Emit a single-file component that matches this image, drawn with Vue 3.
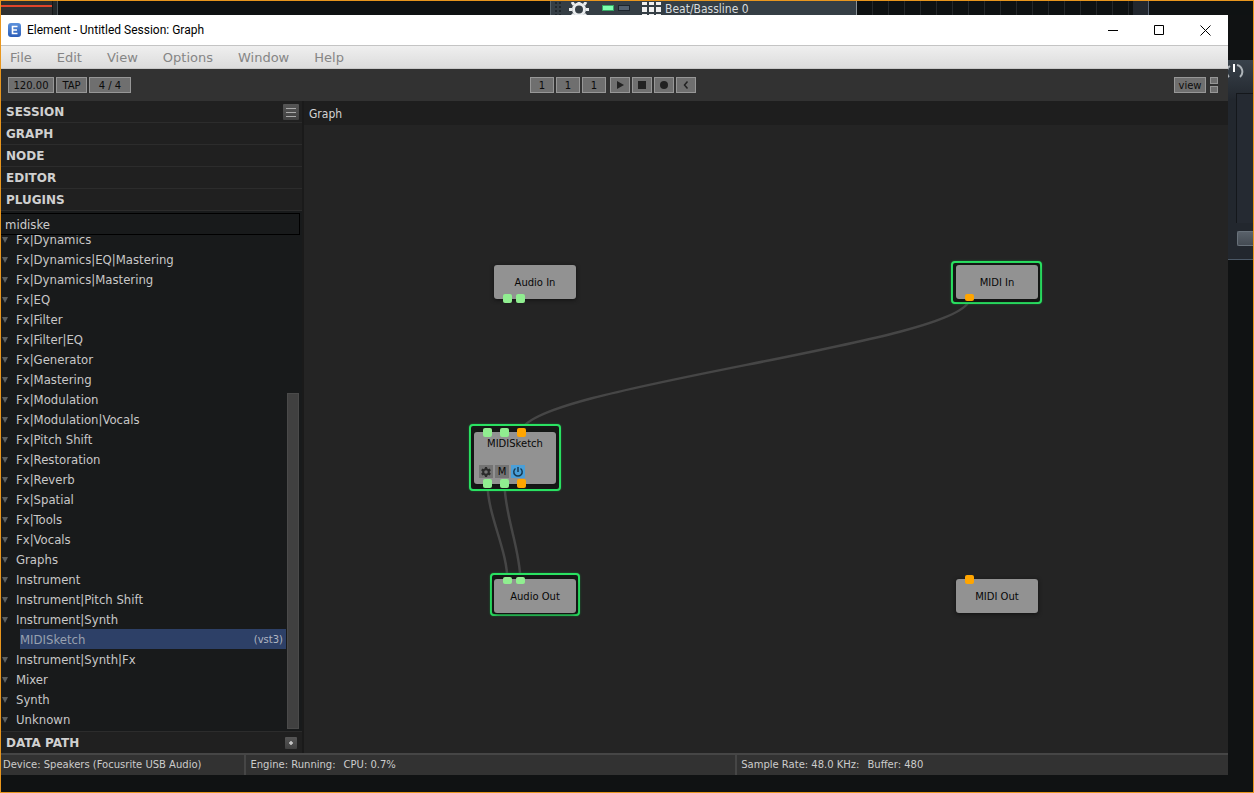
<script setup>
import { ref } from 'vue'

const menus = ['File', 'Edit', 'View', 'Options', 'Window', 'Help']
const panels = ['SESSION', 'GRAPH', 'NODE', 'EDITOR', 'PLUGINS']
const search = ref('midiske')

const plugins = [
  'Fx|Dynamics', 'Fx|Dynamics|EQ|Mastering', 'Fx|Dynamics|Mastering', 'Fx|EQ', 'Fx|Filter',
  'Fx|Filter|EQ', 'Fx|Generator', 'Fx|Mastering', 'Fx|Modulation', 'Fx|Modulation|Vocals',
  'Fx|Pitch Shift', 'Fx|Restoration', 'Fx|Reverb', 'Fx|Spatial', 'Fx|Tools', 'Fx|Vocals',
  'Graphs', 'Instrument', 'Instrument|Pitch Shift', 'Instrument|Synth',
  { name: 'MIDISketch', format: '(vst3)' },
  'Instrument|Synth|Fx', 'Mixer', 'Synth', 'Unknown',
].map((p) => (typeof p === 'string' ? { name: p } : p))

/* Node positions on the canvas; port positions are relative to the node body. */
const nodes = [
  { name: 'Audio In', x: 190, y: 140, h: 34, ports: [['audio', 9, 29, 9], ['audio', 22, 29, 9]] },
  { name: 'MIDI In', x: 652, y: 140, h: 34, frame: [4, 4, 5, 5], ports: [['midi', 9, 29, 7]] },
  {
    name: 'MIDISketch', x: 170, y: 307, h: 52, frame: [8, 5, 7, 5], tools: true,
    ports: [
      ['audio', 9, -4, 9], ['audio', 26, -4, 9], ['midi', 43, -4, 9],
      ['audio', 9, 47, 9], ['audio', 26, 47, 9], ['midi', 43, 47, 9],
    ],
  },
  { name: 'Audio Out', x: 190, y: 454, h: 34, frame: [6, 4, 3, 4], ports: [['audio', 9, -2, 7], ['audio', 22, -2, 7]] },
  { name: 'MIDI Out', x: 652, y: 454, h: 34, ports: [['midi', 9, -4, 9]] },
]
const px = (n) => n + 'px'
const nodeStyle = (n) => ({ left: px(n.x), top: px(n.y), height: px(n.h) })
const frameStyle = ([t, r, b, l]) => ({ top: px(-t), right: px(-r), bottom: px(-b), left: px(-l) })
const portStyle = ([, x, y, h]) => ({ left: px(x), top: px(y), height: px(h) })
</script>

<template>
  <div class="desktop">
    <div class="playlist">
      <div class="wave"></div>
      <div class="gap"></div>
      <div class="track">
        <span class="grip"></span>
        <svg class="gear" width="22" height="13" viewBox="0 0 22 13">
          <g fill="none" stroke="#e9ecee">
            <circle cx="11" cy="7.500" r="5.500" stroke-width="3" />
            <path d="M11 1v-3M11 13v3M4 7.500H1M18 7.500h3M6 3L4 0M16 3l2-3M6 12l-2 2M16 12l2 2" stroke-width="3" />
          </g>
        </svg>
        <span class="led on"></span>
        <span class="led"></span>
        <svg class="pads" width="20" height="13" viewBox="0 0 20 13" fill="#f0f0f0">
          <path d="M0 0h5v3H0zM7 0h5v3H7zM14 0h5v3h-5zM0 5h5v5H0zM7 5h5v5H7zM14 5h5v5h-5zM0 12h5v1H0zM7 12h5v1H7zM14 12h5v1h-5z" />
        </svg>
        <span class="track-name">Beat/Bassline 0</span>
      </div>
      <div class="cells"></div>
      <div class="edge"></div>
      <div class="rest"></div>
    </div>

    <div class="middle">
      <main class="window">
        <header class="titlebar">
          <svg width="14" height="14" viewBox="0 0 14 14">
            <defs>
              <linearGradient id="logo" x2="0" y2="1">
                <stop stop-color="#5d92dc" /><stop offset="1" stop-color="#2a5cb8" />
              </linearGradient>
            </defs>
            <rect width="13" height="14" rx="3" fill="url(#logo)" />
            <path d="M9.500 3.500H4.500v7h5M4.500 7H9" fill="none" stroke="#fff" stroke-width="1.600" />
          </svg>
          <h1>Element - Untitled Session: Graph</h1>
          <div class="controls">
            <button aria-label="Minimize"><svg width="11" height="11" viewBox="0 0 11 11"><path d="M0 5.500h10" /></svg></button>
            <button aria-label="Maximize"><svg width="11" height="11" viewBox="0 0 11 11"><path d="M.5.5h9v9h-9z" /></svg></button>
            <button aria-label="Close"><svg width="11" height="11" viewBox="0 0 11 11"><path d="M.5.5l10 10M10.500.5l-10 10" /></svg></button>
          </div>
        </header>

        <nav class="menubar">
          <button v-for="m in menus" :key="m">{{ m }}</button>
        </nav>

        <div class="toolbar">
          <div class="group">
            <button class="tool tempo">120.00</button>
            <button class="tool tap">TAP</button>
            <button class="tool meter">4 / 4</button>
          </div>
          <div class="group">
            <button class="tool beat">1</button>
            <button class="tool beat">1</button>
            <button class="tool beat">1</button>
            <span class="spacer"></span>
            <button class="tool icon" aria-label="Play"><svg width="10" height="10" viewBox="0 0 10 10"><path d="M2 1l7 4-7 4z" /></svg></button>
            <button class="tool icon" aria-label="Stop"><svg width="10" height="10" viewBox="0 0 10 10"><path d="M1 1h8v8H1z" /></svg></button>
            <button class="tool icon" aria-label="Record"><svg width="10" height="10" viewBox="0 0 10 10"><circle cx="5" cy="5" r="4" /></svg></button>
            <button class="tool icon" aria-label="Rewind"><svg width="10" height="10" viewBox="0 0 10 10"><path d="M6.500 1.500L3.500 5l3 3.500" fill="none" stroke="#222" stroke-width="1.500" /></svg></button>
          </div>
          <div class="group right">
            <button class="tool view">view</button>
            <div class="squares"><button aria-label="Upper pane"></button><button aria-label="Lower pane"></button></div>
          </div>
        </div>

        <div class="body">
          <aside class="sidebar">
            <h2 v-for="(p, i) in panels" :key="p" class="panel">
              {{ p }}
              <button v-if="i === 0" class="list-btn" aria-label="Session menu">
                <svg width="10" height="9" viewBox="0 0 10 9"><path d="M0 .5h10M0 4.500h10M0 8.500h10" stroke="#aaa" /></svg>
              </button>
            </h2>
            <input v-model="search" class="search" type="text" aria-label="Search plugins" />
            <div class="tree">
              <ul>
                <li v-for="p in plugins" :key="p.name" :class="{ selected: p.format }">
                  <svg v-if="!p.format" width="6" height="6" viewBox="0 0 6 6"><path d="M0 0h6L3 6z" fill="#5c6061" /></svg>
                  <span>{{ p.name }}</span>
                  <small v-if="p.format">{{ p.format }}</small>
                </li>
              </ul>
              <div class="scroll"><div class="thumb"></div></div>
            </div>
            <h2 class="panel last">
              DATA PATH
              <button class="add-btn" aria-label="Add data path">
                <svg width="6" height="6" viewBox="0 0 6 6"><path d="M3 1v4M1 3h4" stroke="#ccc" stroke-width="1.500" /></svg>
              </button>
            </h2>
          </aside>

          <section class="graph">
            <div class="tab">Graph</div>
            <div class="canvas">
              <svg class="wires" width="100%" height="100%">
                <path d="M665.500 173.500C665.500 218 217.500 262 217.500 307" />
                <path d="M183.500 358C183.500 391 203.500 424 203.500 457" />
                <path d="M200.500 358C200.500 391 216.500 424 216.500 457" />
              </svg>
              <div v-for="n in nodes" :key="n.name" class="node" :style="nodeStyle(n)">
                <div v-if="n.frame" class="frame" :style="frameStyle(n.frame)"></div>
                <div class="face" :class="{ plugin: n.tools }">
                  <span>{{ n.name }}</span>
                  <div v-if="n.tools" class="node-tools">
                    <button aria-label="Settings">
                      <svg width="12" height="12" viewBox="0 0 12 12" fill="none" stroke="#2b2b2b">
                        <circle cx="6" cy="6" r="2.800" stroke-width="2" />
                        <path d="M6 1v2M6 9v2M1.700 3.500l1.700 1M8.600 7.500l1.700 1M1.700 8.500l1.700-1M8.600 4.500l1.700-1" stroke-width="2.200" />
                      </svg>
                    </button>
                    <button>M</button>
                    <button class="power" aria-label="Power">
                      <svg width="12" height="12" viewBox="0 0 12 12" fill="none" stroke="#173a52" stroke-width="1.500">
                        <path d="M6 1v5M3.500 2.500a4.200 4.200 0 1 0 5 0" />
                      </svg>
                    </button>
                  </div>
                </div>
                <i v-for="(p, i) in n.ports" :key="i" class="port" :class="p[0]" :style="portStyle(p)"></i>
              </div>
            </div>
          </section>
        </div>

        <footer class="status">
          <div>Device: Speakers (Focusrite USB Audio)</div>
          <div class="wide"><span>Engine: Running:</span><span>CPU: 0.7%</span></div>
          <div class="wide"><span>Sample Rate: 48.0 KHz:</span><span>Buffer: 480</span></div>
        </footer>
      </main>

      <div class="mixer">
        <div class="mixer-panel">
          <svg width="16" height="20" viewBox="0 0 16 20" fill="none" stroke="#aeb4b9" stroke-width="2">
            <path d="M1 17a7 7 0 0 1 1-11M9 5a7 7 0 0 1 3 12" />
            <path d="M6 4v8" stroke="#fff" />
          </svg>
          <div class="slot"></div>
          <div class="fader"></div>
        </div>
      </div>
    </div>
  </div>
</template>

<style>
body {
  margin: 0;
  background: #101213;
}
</style>

<style scoped>
* {
  box-sizing: border-box;
}
button {
  padding: 0;
  border: 0;
  background: none;
  font: inherit;
  color: inherit;
}
svg {
  display: block;
  flex: none;
}
.desktop {
  display: flex;
  flex-direction: column;
  min-height: 100vh;
  padding-bottom: 17px;
  border: 1px solid #e8961e;
  background: #101213;
  font-family: "DejaVu Sans", Verdana, sans-serif;
  overflow: hidden;
}
.playlist {
  display: flex;
  height: 14px;
  overflow: hidden;
  background: #0f1213;
}
.wave {
  width: 51px;
  background: linear-gradient(#2c2e2e 4px, #e0452a 4px, #e0452a 6px, #2f3031 6px);
}
.gap {
  flex: 0 1 498px;
  border-left: 1px solid #151718;
  background: linear-gradient(90deg, #24292b 4px, #4c5357 4px, #4c5357 5px, #0e1112 5px);
}
.track {
  display: flex;
  align-items: center;
  width: 306px;
  flex: none;
  padding-left: 4px;
  border-left: 1px solid #58636a;
  background: #353e45;
  color: #d8dcde;
  font: 12px/14px "DejaVu Sans Condensed", "DejaVu Sans", sans-serif;
}
.track-name {
  padding-top: 2px;
}
.grip {
  width: 8px;
  height: 13px;
  background: repeating-linear-gradient(transparent 0 2px, #353e45 2px 4px), repeating-linear-gradient(90deg, #20272c 0 2px, transparent 2px 4px);
}
.gear {
  margin: 0 12px 0 5px;
}
.led {
  width: 12px;
  height: 6px;
  margin-right: 4px;
  border: 1px solid #1d252d;
  background: #52606f;
}
.led.on {
  border-color: #35a765;
  background: #7dffaf;
}
.pads {
  margin: 0 3px 0 8px;
}
.cells {
  flex: 1 1 277px;
  border-left: 1px solid #8a9297;
  background: repeating-linear-gradient(90deg, #0e1112 0 15px, #25282a 15px 16px);
}
.edge {
  width: 16px;
  border-right: 1px solid #5a6575;
  background: #22272e;
}
.rest {
  width: 104px;
}
.middle {
  display: flex;
  flex: 1;
}
.window {
  display: flex;
  flex-direction: column;
  flex: 1;
  min-width: 0;
  background: #242424;
}
.titlebar {
  display: flex;
  align-items: center;
  height: 30px;
  padding-left: 7px;
  background: #fff;
}
h1 {
  flex: 1;
  margin: 0 0 0 5px;
  font: 12px/16px Roboto, "Noto Sans", sans-serif;
  color: #000;
}
.controls {
  display: flex;
}
.controls button {
  display: grid;
  place-items: center;
  width: 46px;
  height: 28px;
}
.controls path {
  fill: none;
  stroke: #000;
}
.menubar {
  display: flex;
  gap: 25px;
  height: 24px;
  padding-left: 9px;
  border-top: 1px solid #c4c4c4;
  border-bottom: 1px solid #c8c8c8;
  background: linear-gradient(#efefef, #dcdcdc);
  font-size: 13px;
  color: #858585;
}
.toolbar {
  display: grid;
  grid-template-columns: 1fr auto 1fr;
  align-items: center;
  height: 32px;
  padding: 0 10px 0 7px;
  background: #323232;
}
.group {
  display: flex;
  gap: 2px;
}
.right {
  justify-content: flex-end;
  gap: 4px;
}
.tool {
  display: flex;
  align-items: center;
  justify-content: center;
  height: 16px;
  border: 1px solid #979797;
  background: #6f6f6f;
  color: #0c0c0c;
  font-size: 10px;
}
.tool path,
.tool circle {
  fill: #222;
}
.tool path[fill="none"] {
  fill: none;
}
.tempo {
  width: 46px;
}
.tap {
  width: 31px;
}
.meter {
  width: 42px;
}
.beat {
  width: 24px;
}
.icon {
  width: 20px;
}
.view {
  width: 32px;
}
.squares {
  display: flex;
  flex-direction: column;
  gap: 2px;
}
.squares button {
  width: 8px;
  height: 7px;
  border: 1px solid #979797;
  background: #6f6f6f;
}
.body {
  display: flex;
  flex: 1;
  min-height: 0;
}
.sidebar {
  display: flex;
  flex-direction: column;
  width: 303px;
  border-right: 2px solid #1a1a1a;
  background: #181a1b;
}
.panel {
  display: flex;
  align-items: center;
  justify-content: space-between;
  flex: none;
  height: 22px;
  margin: 0;
  padding: 1px 3px 0 5px;
  border-bottom: 1px solid #2c2c2c;
  background: #202020;
  color: #d0d0d0;
  font-size: 12px;
  line-height: 16px;
  font-weight: bold;
}
.last {
  padding: 0 5px;
  border-top: 1px solid #2c2c2c;
  border-bottom: 0;
}
.list-btn,
.add-btn {
  display: grid;
  place-items: center;
  width: 16px;
  height: 16px;
  border-radius: 1px;
  background: linear-gradient(#565656, #414141);
}
.add-btn {
  width: 12px;
  height: 12px;
}
.search {
  flex: none;
  height: 22px;
  margin: 2px 2px 0 0;
  padding: 1px 4px;
  border: 1px solid #000;
  border-left: 0;
  outline: 0;
  background: #181a1b;
  color: #ccc;
  font: 13px "DejaVu Sans Condensed", "DejaVu Sans", sans-serif;
}
.tree {
  display: flex;
  flex: 1 1 495px;
  min-height: 0;
  padding: 0 3px 2px 0;
}
ul {
  display: flex;
  flex: 1;
  flex-direction: column;
  justify-content: flex-end;
  max-height: 494px;
  margin: 0;
  padding: 0;
  overflow: hidden;
  list-style: none;
  color: #c8c8c8;
  font: 13px/19px "DejaVu Sans Condensed", "DejaVu Sans", sans-serif;
}
li {
  display: flex;
  flex: none;
  align-items: center;
  gap: 8px;
  height: 20px;
  padding: 1px 0 0 1px;
}
.selected {
  justify-content: space-between;
  margin-left: 19px;
  padding: 1px 3px 0 0;
  background: #2d4067;
  color: #98a1b0;
}
small {
  font: 10px/19px "DejaVu Sans", sans-serif;
  color: #b0b6c2;
}
.scroll {
  display: flex;
  flex-direction: column;
  justify-content: flex-end;
  width: 13px;
  padding-left: 1px;
}
.thumb {
  height: 68%;
  border: 1px solid #4a4a4a;
  background: #404040;
}
.graph {
  display: flex;
  flex: 1;
  flex-direction: column;
  min-width: 0;
}
.tab {
  height: 24px;
  padding-left: 5px;
  background: #1e1e1e;
  color: #d4d4d4;
  font: 12px/26px "DejaVu Sans Condensed", "DejaVu Sans", sans-serif;
}
.canvas {
  position: relative;
  flex: 1;
  overflow: hidden;
  background: #242424;
}
.wires {
  position: absolute;
  inset: 0;
}
.wires path {
  fill: none;
  stroke: #464646;
  stroke-width: 2.5;
}
.node {
  position: absolute;
  width: 82px;
}
.frame {
  position: absolute;
  border: 2px solid #2ae262;
  border-radius: 4px;
  background: #161a17;
  box-shadow: 0 0 2px #1a7a38;
}
.face {
  position: relative;
  display: flex;
  flex-direction: column;
  align-items: center;
  justify-content: center;
  height: 100%;
  border-radius: 3px;
  background: #929292;
  box-shadow: 0 1px 4px #111;
  color: #080808;
  font-size: 10px;
}
.plugin {
  justify-content: space-between;
  padding: 6px 5px;
}
.node-tools {
  display: flex;
  align-self: flex-start;
  gap: 2px;
}
.node-tools button {
  display: grid;
  place-items: center;
  width: 14px;
  height: 13px;
  background: #747474;
}
.node-tools .power {
  background: #4a9fd8;
}
.port {
  position: absolute;
  width: 9px;
  border-radius: 2px;
  background: #90ee90;
}
.port.midi {
  background: #ffa500;
}
.status {
  display: grid;
  grid-template-columns: 1fr 2fr 2fr;
  height: 22px;
  border-top: 2px solid #464646;
  background: #323232;
  color: #ccc;
  font-size: 10px;
  line-height: 19px;
}
.status div {
  display: flex;
  gap: 8px;
  padding-left: 2px;
  white-space: nowrap;
}
.status .wide {
  margin-left: -2px;
  padding-left: 4px;
  border-left: 2px solid #464646;
}
.mixer {
  width: 25px;
  padding-top: 45px;
  background: #101213;
}
.mixer-panel {
  height: 200px;
  border-bottom: 1px solid #4b5866;
  background: linear-gradient(#39424b, #22272e 40px);
  overflow: hidden;
}
.slot {
  height: 130px;
  margin: 13px 0 8px 8px;
  border: 1px solid #14171b;
  border-right: 0;
  border-bottom: 0;
  background: #252a32;
}
.fader {
  height: 15px;
  margin-left: 9px;
  border: 1px solid #68717a;
  border-right: 0;
  border-radius: 2px 0 0 2px;
  background: linear-gradient(#59616a, #444b53);
}
</style>
